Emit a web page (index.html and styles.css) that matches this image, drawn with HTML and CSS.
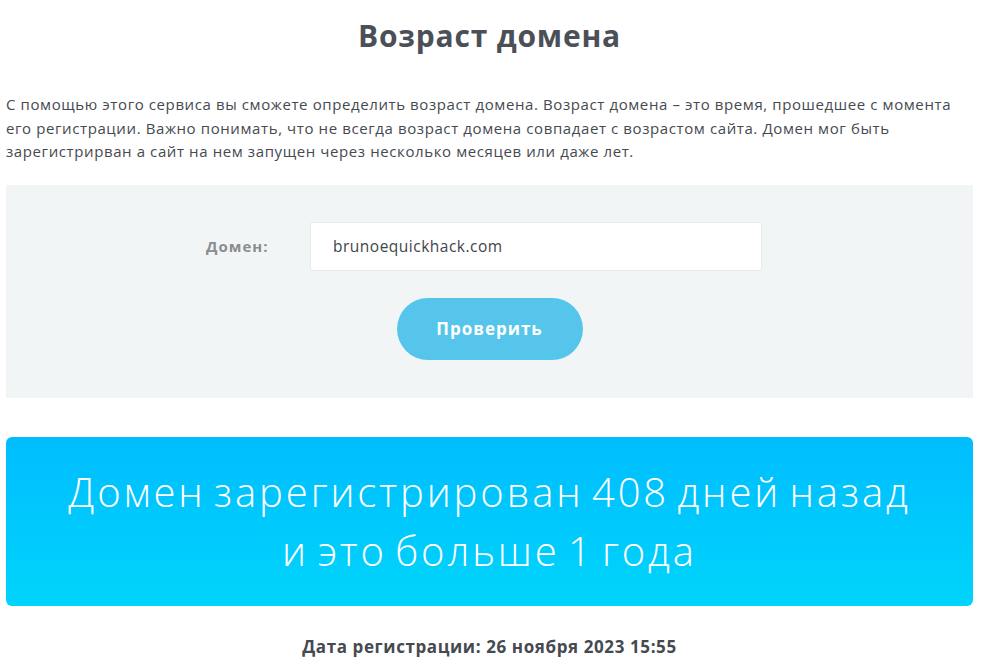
FILE: index.html
```html
<!DOCTYPE html>
<html lang="ru">
<head>
    <meta charset="UTF-8">
    <meta name="viewport" content="width=device-width, initial-scale=1.0">
    <title>Возраст домена</title>
    <link rel="stylesheet" href="styles.css">
</head>
<body>
    <div class="page">
        <h1>Возраст домена</h1>
        <p class="intro">С помощью этого сервиса вы сможете определить возраст домена. Возраст домена – это время, прошедшее с момента его регистрации. Важно понимать, что не всегда возраст домена совпадает с возрастом сайта. Домен мог быть зарегистрирван а сайт на нем запущен через несколько месяцев или даже лет.</p>
        <form class="check-form">
            <div class="form-row">
                <label for="domain">Домен:</label>
                <input type="text" id="domain" name="domain" value="brunoequickhack.com">
            </div>
            <button type="button">Проверить</button>
        </form>
        <div class="result">
            Домен зарегистрирован 408 дней назад<br>
            и это больше 1 года
        </div>
        <p class="reg-date">Дата регистрации: 26 ноября 2023 15:55</p>
    </div>
</body>
</html>
```

FILE: styles.css
```css
body {
    margin: 0;
    font-family: "Open Sans", "Liberation Sans", sans-serif;
    color: #454a50;
    background-color: white;
}
.page {
    width: 967px;
    margin-left: 6px;
}
h1 {
    margin: 16px 0 0;
    text-align: center;
    font-size: 30px;
    font-weight: 700;
    line-height: 40px;
    letter-spacing: 0.8px;
    color: #4b5058;
}
.intro {
    margin: 37px 0 0;
    font-size: 15px;
    line-height: 23.5px;
    letter-spacing: 0.6px;
    color: #454a50;
}
.check-form {
    margin-top: 21px;
    background-color: #f2f5f6;
    padding: 37px 0 38px;
    display: flex;
    flex-direction: column;
    align-items: center;
}
.form-row {
    display: flex;
    align-items: center;
    width: 100%;
}
.form-row label {
    margin-left: 200px;
    width: 104px;
    font-size: 15px;
    font-weight: 700;
    letter-spacing: 1px;
    color: #8a8d90;
}
.form-row input {
    width: 452px;
    height: 49px;
    box-sizing: border-box;
    border: 1px solid #e8ebec;
    border-radius: 2px;
    background-color: white;
    padding: 0 22px;
    font-family: "Open Sans", sans-serif;
    font-size: 15.5px;
    letter-spacing: 0.5px;
    color: #3f444a;
}
button {
    margin-top: 27px;
    width: 186px;
    height: 62px;
    border: none;
    border-radius: 31px;
    background-color: #56c5ec;
    color: white;
    font-family: "Open Sans", sans-serif;
    font-size: 17px;
    font-weight: 700;
    letter-spacing: 1px;
    cursor: pointer;
}
.result {
    margin-top: 39px;
    height: 169px;
    box-sizing: border-box;
    padding-top: 25px;
    border-radius: 6px;
    background: linear-gradient(#00bdfe, #00d4fb);
    color: white;
    text-align: center;
    font-size: 40px;
    font-weight: 300;
    line-height: 59px;
    letter-spacing: 2.9px;
    word-spacing: -5px;
}
.reg-date {
    margin: 29px 0 0;
    text-align: center;
    font-size: 17px;
    font-weight: 700;
    letter-spacing: 0.6px;
    color: #454a50;
}
```
